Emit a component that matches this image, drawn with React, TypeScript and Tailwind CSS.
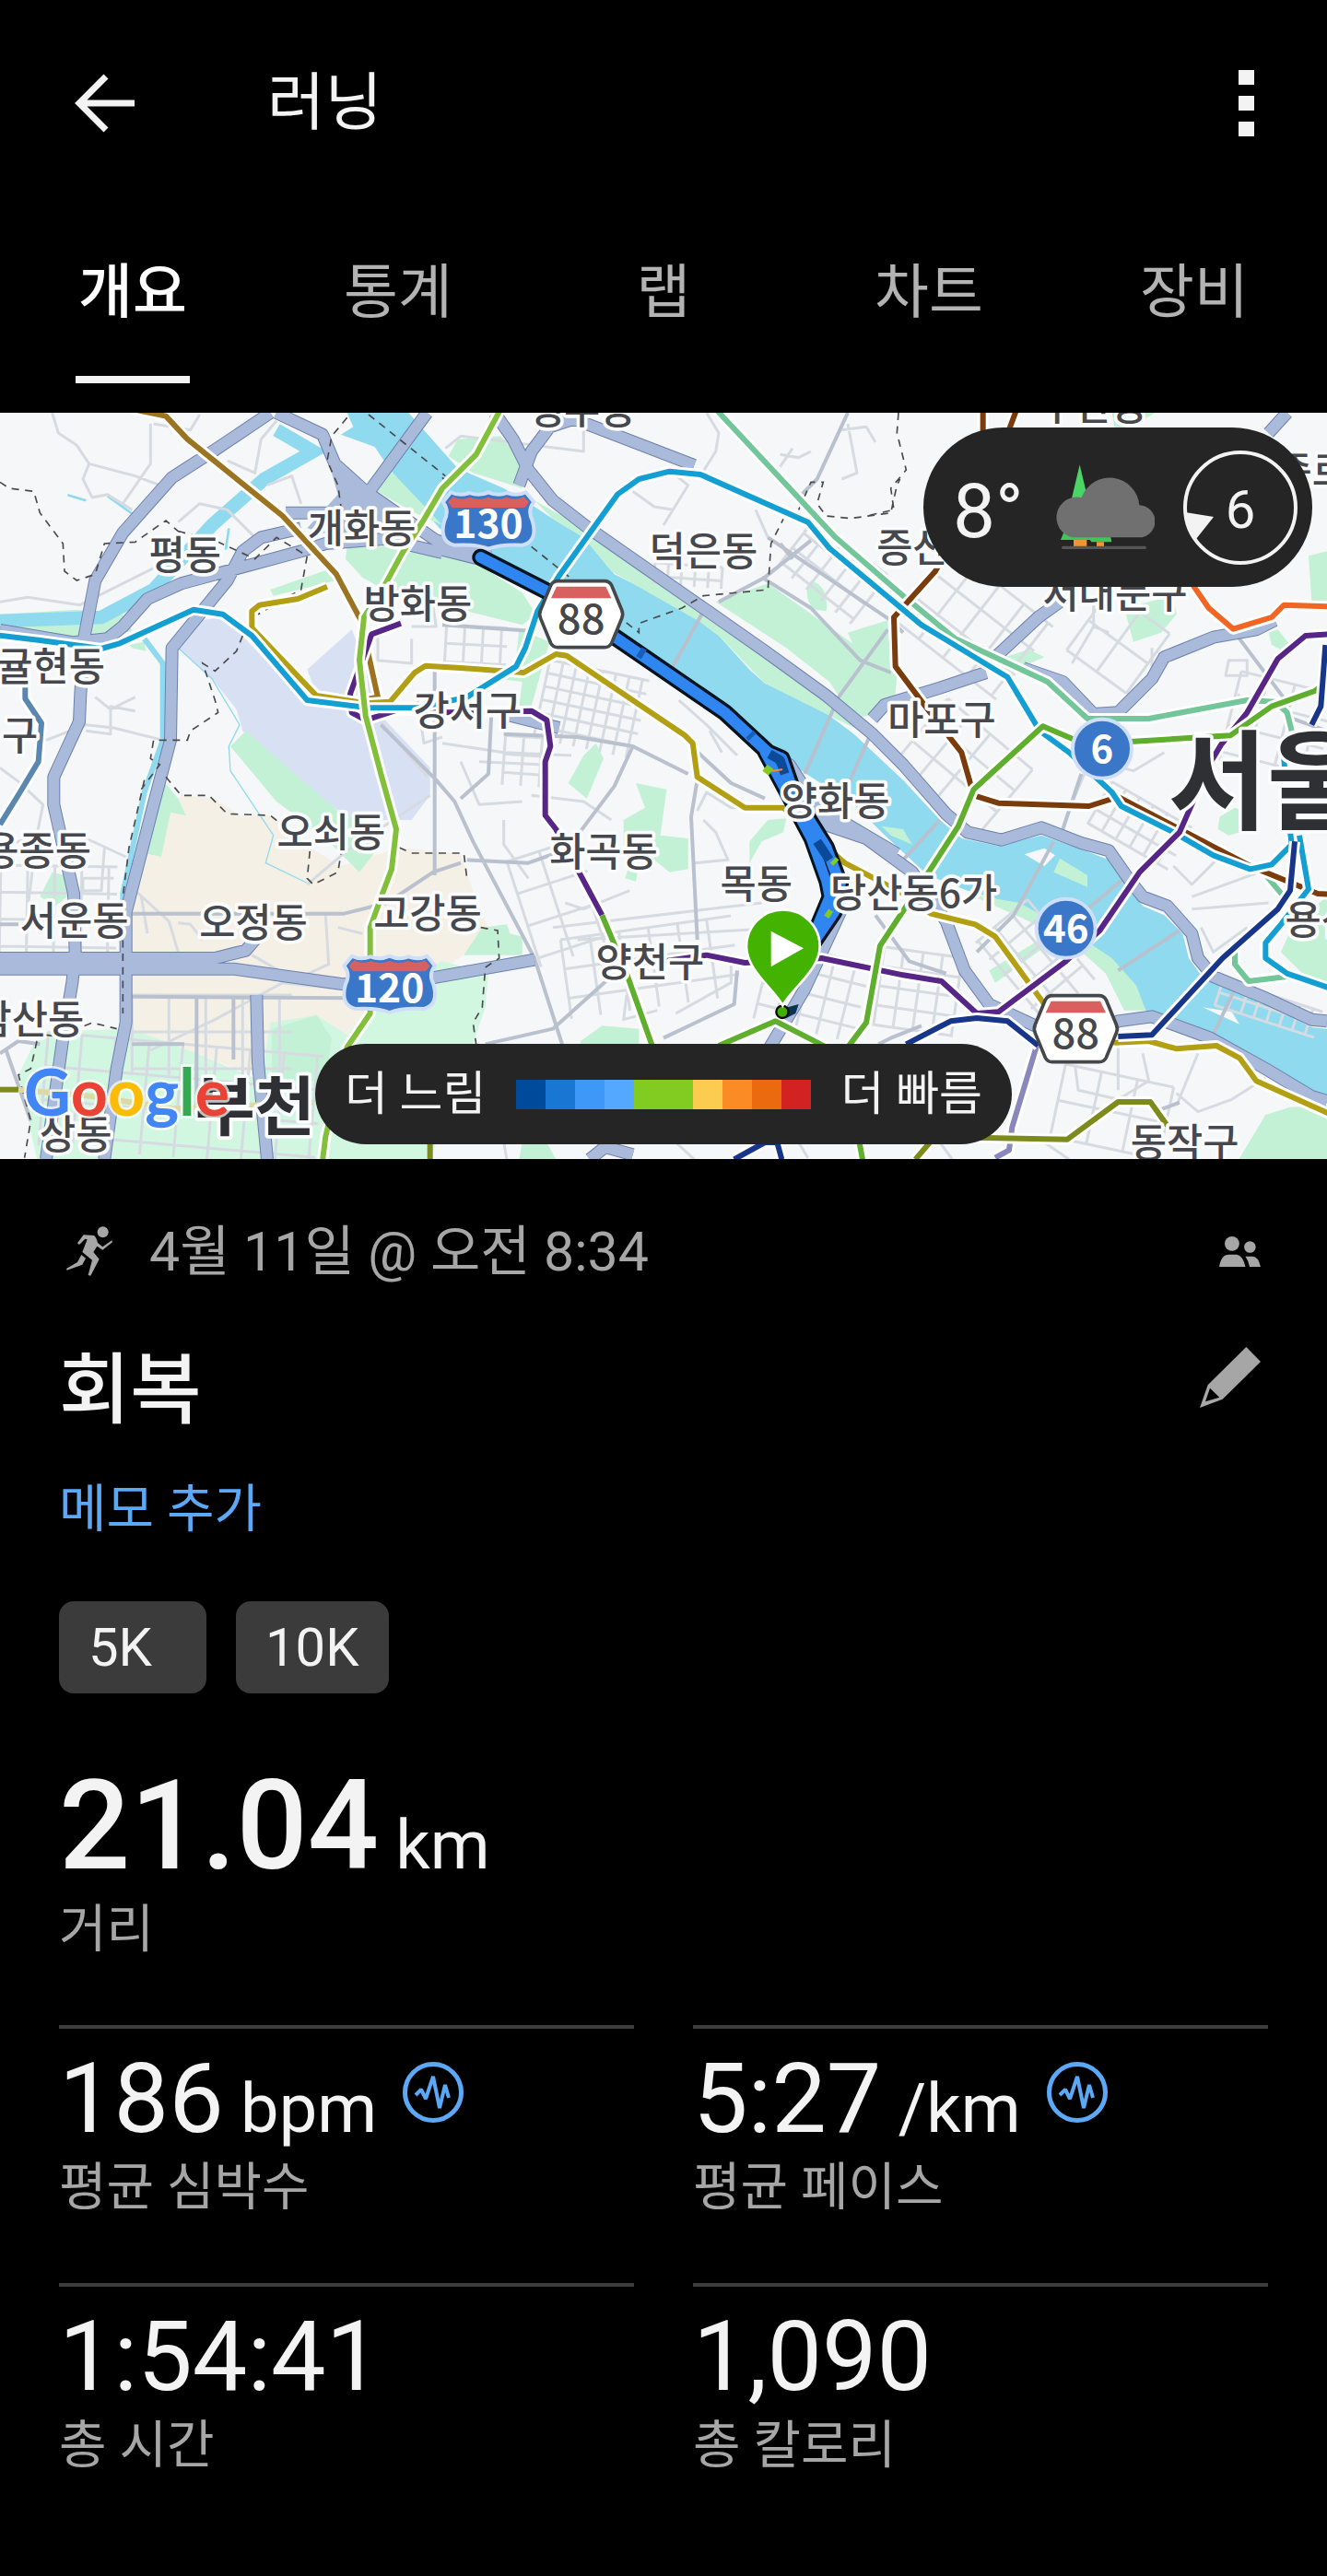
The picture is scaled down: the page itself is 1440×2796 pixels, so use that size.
import { useState } from "react";
import type { ReactNode } from "react";
import clsx from "clsx";

const tabs = ["개요", "통계", "랩", "차트", "장비"];

const paceColors = [
  "bg-[#004a9b]",
  "bg-[#1976d2]",
  "bg-[#3d98f7]",
  "bg-[#55a8ff]",
  "bg-[#82cb20]",
  "bg-[#82cb20]",
  "bg-[#fbcc4f]",
  "bg-[#fb8b24]",
  "bg-[#ec6a0f]",
  "bg-[#d32222]",
];

const stats = [
  { value: "186", unit: "bpm", label: "평균 심박수", hasChart: true },
  { value: "5:27", unit: "/km", label: "평균 페이스", hasChart: true },
  { value: "1:54:41", unit: "", label: "총 시간", hasChart: false },
  { value: "1,090", unit: "", label: "총 칼로리", hasChart: false },
];

/* ---------- map data, three map units per pixel ---------- */

const RIVER =
  "M1130 24L1150 70L1110 95L1220 135L1270 210L1430 400L1560 490L1780 600L2010 740L2370 980L2480 1100L2560 1160L2610 1190L2780 1300L2870 1390L3020 1530L3150 1580L3320 1630L3520 1740L3600 1800L3690 1890L3730 1970L3780 1980L3970 2070L4260 2240L4320 2245V2030L4270 2025L4120 1950L3920 1870L3870 1800L3850 1720L3790 1660L3720 1630L3670 1570L3610 1480L3520 1445L3390 1400L3250 1435L3130 1410L3060 1350L2940 1220L2780 1070L2700 1010L2620 960L2490 905L2440 860L2340 750L2220 660L2000 550L1900 430L1800 370L1740 330L1640 270L1490 205L1330 24Z";

const parks = [
  "M0 680L250 665L400 680L430 735L250 762L30 715Z",
  "M420 780L470 770L475 800L430 790Z",
  "M880 600L1080 530L1095 570L890 620Z",
  "M750 1110L800 1060L960 1200L1100 1320L1180 1360L1240 1430L1170 1520L1050 1400L900 1290Z",
  "M530 1220L580 1280L605 1335L555 1325L525 1470L480 1460Z",
  "M170 1520L210 1530L230 1590L180 1630L130 1600Z",
  "M1270 210L1440 390L1340 345L1220 275Z",
  "M1490 110L1630 100L1720 200L1700 270L1540 220L1460 165Z",
  "M1740 310L1830 360L1950 440L2230 640L2340 740L2200 660L1990 540L1900 430L1800 370Z",
  "M1130 460L1420 460L1560 520L1700 610L1745 680L1700 715L1440 650L1250 600L1180 560L1125 500Z",
  "M1690 730L1790 770L1780 800L1730 980L1690 980L1700 900L1620 890L1680 820Z",
  "M2330 640L2500 580L2740 750L2920 880L2910 990L2780 1020L2700 900L2560 790Z",
  "M2000 520L2080 530L2690 960L2800 1060L2490 905L2340 750L2220 660Z",
  "M2640 570Q2700 590 2690 670L2650 665Q2610 620 2640 570Z",
  "M2760 740L2890 700L2900 870L2810 850Z",
  "M1900 1140L1940 1100L1965 1150L1910 1280L1850 1230Z",
  "M2070 1230L2170 1250L2150 1400L2240 1410L2240 1510L2180 1520L2130 1480L2090 1440L2070 1550L2035 1540L2060 1460L2030 1430L2030 1350L2100 1310Z",
  "M2440 1420L2500 1350L2560 1345L2550 1390L2480 1420L2440 1490Z",
  "M1570 1700L1650 1690L1660 1720L1700 1730L1700 1790L1510 1790Z",
  "M1890 2070L1960 2020L2080 2030L2080 2090L1890 2090Z",
  "M3660 660L3820 620L3830 680L3780 740L3690 770Z",
  "M3270 820L3350 795L3400 820L3330 850Z",
  "M3620 24L3760 24L3700 60L3630 80Z",
  "M4130 740L4160 730L4200 780L4180 800L4140 780Z",
  "M4260 490L4320 475V660L4270 640Z",
  "M3970 1340L4020 1310L4075 1330L4070 1380L4000 1400L3965 1380Z",
  "M3150 1590L3320 1620L3530 1740L3620 1800L3700 1890L3730 1970L3660 1970L3600 1850L3500 1760L3330 1670Z",
  "M3220 1840L3400 1730L3420 1750L3240 1880Z",
  "M4210 1690L4320 1600V1890L4250 1860L4170 1780Z",
  "M4120 2310L4200 2285L4320 2280V2460H4030Z",
  "M3450 1475L3540 1530L3540 1568L3430 1520Z",
  "M2870 1370L2940 1380L2970 1430L2900 1400Z",
  "M1700 2400L1780 2400L1810 2455L1690 2455Z",
];

const lightParks = [
  "M130 2040L430 2030L640 2110L850 2200L880 2010L1030 1985L1130 2050L1250 1900L1440 1810L1590 1850L1580 1960L1540 2080L1400 2455L120 2455L60 2180Z",
];

const streams = [
  { d: "M900 80L1020 150L860 240L690 390L500 600L330 690L0 702", w: 44 },
  { d: "M470 760L530 840L530 1090L470 1260L400 1590V1830", w: 18 },
  { d: "M220 292L280 310M350 295L440 360M745 400L735 470", w: 8 },
  { d: "M580 790L690 890L780 1040L745 1110L750 1190L890 1400L865 1490L1010 1560", w: 4 },
];

const highways = [
  "M880 24L700 145L560 235L400 415L310 570L275 750L262 940L258 1030L175 1210V1300L240 1590L245 1790L235 1880L205 2060L150 2455",
  "M900 24L1050 95L1090 190L1190 280L1320 370L1420 440L1600 480",
  "M1390 24L1195 290L1080 350L930 350",
  "M0 732L240 772L350 760L400 720L480 630L590 580L980 475L1060 450L1250 435L1440 480",
  "M980 400L850 430L790 475L740 570L560 790L555 1090L500 1300L410 1650V2010L380 2160L340 2455",
  "M0 1800H700L800 1775L830 1740",
  "M0 1835H760L1120 1885L1420 1862L1740 1805",
  "M835 1920L840 2140L870 2455",
  "M1870 45L2260 195",
  "M1880 40L1790 70L1730 150L1690 260",
  "M1610 24L1670 110L1720 210L1800 310L1910 395L2060 500L2290 660L2490 800L2690 945L2840 1070L2940 1170L3080 1330L3150 1390L3260 1415L3390 1375L3520 1425L3610 1450L3680 1550L3720 1600L3800 1630L3880 1720L3900 1800L3950 1860L4120 1930L4270 2000L4320 2005",
  "M1440 470L1560 500L1780 610L2010 760L2370 1010L2500 1130L2570 1170L2700 1370L2820 1410L2970 1520L3080 1680L3140 1840L3220 1950L3370 2020L3600 2030L3640 2005L3750 1990L3940 2060L4120 2160L4270 2250L4320 2265",
  "M2700 1330L2920 1460",
  "M2700 1560L2740 1640L2620 1900L2500 2100",
  "M4190 24L4130 90",
  "M3450 640L3380 690L3240 820",
  "M3210 870L3060 920L2880 975L2840 1020",
  "M3330 855L3460 900L3560 1005L3640 1000L3750 890L3790 820L3950 755L4090 730L4150 700",
  "M1920 2455L1970 2415L2060 2440",
  "M1640 1005L1820 1050",
];

const streetBlocks = [
  { x: 1760, y: 860, w: 330, h: 260, step: 44, angle: 12 },
  { x: 2130, y: 520, w: 220, h: 70, step: 44, angle: 4 },
  { x: 2560, y: 440, w: 300, h: 200, step: 60, angle: 38 },
  { x: 1450, y: 720, w: 200, h: 140, step: 60, angle: 3 },
  { x: 1640, y: 1080, w: 150, h: 160, step: 60, angle: 4 },
  { x: 2960, y: 560, w: 420, h: 300, step: 100, angle: 38 },
  { x: 2960, y: 1040, w: 360, h: 260, step: 90, angle: 40 },
  { x: 3560, y: 1290, w: 300, h: 160, step: 52, angle: 30 },
  { x: 2860, y: 1780, w: 260, h: 260, step: 64, angle: 8 },
  { x: 3200, y: 1700, w: 340, h: 220, step: 70, angle: 50 },
  { x: 2480, y: 1780, w: 330, h: 260, step: 70, angle: 14 },
  { x: 1840, y: 1700, w: 560, h: 260, step: 96, angle: -8 },
  { x: 1700, y: 1440, w: 240, h: 360, step: 110, angle: -18 },
  { x: 430, y: 1920, w: 520, h: 260, step: 120, angle: 0 },
  { x: 140, y: 2080, w: 900, h: 370, step: 110, angle: 5 },
  { x: 0, y: 1500, w: 380, h: 300, step: 88, angle: 1 },
  { x: 3440, y: 2180, w: 360, h: 240, step: 120, angle: 12 },
  { x: 3960, y: 1920, w: 340, h: 90, step: 44, angle: 18 },
  { x: 4000, y: 900, w: 320, h: 300, step: 90, angle: 14 },
  { x: 3520, y: 650, w: 240, h: 240, step: 120, angle: 36 },
];

const streets = [
  "M170 24L190 90L250 130L290 190L440 230L520 260M290 190L270 240L300 300L350 290L430 340M490 60L490 190L400 320M500 60L620 80L650 30",
  "M0 640L90 625L260 650L440 560L560 500M580 380L650 320L740 340L830 430M740 180L830 220L850 110L900 50M870 260L950 230L980 320",
  "M0 1180L60 1225L140 1300L120 1400L0 1440M150 1090L280 1040L370 1050L530 1090M310 950L360 990L440 950M280 1060L360 1070V980L440 995",
  "M280 1410L410 1470M340 1440L330 1580H270V1540H370M110 1480L90 1640M440 1580L550 1680L580 1780M460 1600L480 1720",
  "M580 1685L620 1690L660 1740M1060 1660L1070 1820L960 1870L820 1790M1100 1700L1180 1720M490 2100L700 2000L920 1880L1100 1900",
  "M1000 1560L1130 1450L1400 1270M1230 1020L1390 1210M1230 740V830L1340 840V760M1400 600L1420 720H1340M1360 960L1380 1100L1440 1080",
  "M1450 140L1500 100L1900 150V60M2060 280L2130 330L2190 340M2160 390L2240 260L2190 220M2300 24L2340 90L2330 150L2280 230",
  "M2540 160L2600 170L2640 150M2580 140L2540 200M2740 80L2820 70L2850 120M2760 60L2790 220L2740 240M2460 340L2500 430",
  "M1440 1100L1640 1130L1860 1140M1500 1160L1560 1300L1700 1290M1560 1160L1770 1170M1730 1270L1900 1290L1990 1350M1640 1350L1640 1430L1720 1540",
  "M2210 960L2300 1040L2400 1140M2310 1060L2350 1130M2270 1320L2300 1260L2380 1310L2410 1310M2290 1350L2330 1390L2370 1480L2260 1490",
  "M1840 1620L1900 1640L2050 1580M1800 1700L2480 1620M1880 1740L2560 1700M2040 1920L2030 2000L2140 1970M2200 1980L2380 1880V1820",
  "M3490 840L3560 720L3610 740M3560 720V640M3750 790V860M4030 940L4080 1010M4000 830H4060V880H3990ZM3580 1160L3690 1190L3790 1130",
  "M3500 2150L3510 2230L3640 2260L3740 2200L3720 2110M3640 2080V2230M3900 2110L3830 2280M3830 2240L3900 2300L4010 2260L4120 2190",
  "M3880 1600L4100 1520M3880 1640L4130 1620M3910 1700L3950 1780L4060 1700M3820 1500L3880 1560L3990 1450M3480 1320L3530 1200",
  "M1640 2400L1650 2455M2200 2400L2260 2455M3060 2400L3100 2455M3400 2400L3480 2455M2600 2400L2630 2450",
];

const mainStreets = [
  "M0 1690H60M430 1655H1120L1260 1620L1410 1520L1500 1490M1415 840V1530M1240 1040L1420 1220L1480 1290L1540 1420L1740 1800L1830 2080",
  "M600 2080H430M640 1930V2300M760 1930V2130M430 1925L1120 1930M0 2110L60 2070L130 2080M20 2100L100 2330",
  "M1440 715L1740 735M1600 1000L1590 1200L1500 1280M1640 1070L1880 1080L2060 1110L2240 1200M2060 1110L2000 1240L1880 1400",
  "M1520 1480L1720 1490L1860 1440M2270 1220L2250 1340L2270 1740M1580 2080L1800 2030L2000 1850M2400 1840L2390 1950L2160 2060",
  "M2760 24L2660 240L2610 290M2340 640L2490 560L2640 440M2500 430L2900 700L2940 740M2480 560L2640 660L2800 830L2900 870",
  "M2890 730L2730 950M2730 950L2620 1200M2830 1080L2750 1260M2290 670L2180 870M2540 450L2580 500M2240 1100L2380 1230L2490 1280",
  "M3060 1350L2940 1480M3430 1420L3300 1660L3180 1780M3460 1380L3520 1200M3660 1540L3540 1640M3840 1710L3640 1840M4020 1900L3940 2070",
  "M4020 740L4200 980M4320 1060L4180 1010M2850 1660L2960 1810L3080 1850M2860 2080L2900 2060L3000 2020M3840 2270L3760 2300",
];

const borders = [
  "M0 250L30 270L110 280L130 350L205 450L210 540L250 570L310 550L340 450L440 445L540 375L580 410",
  "M580 410L700 440L830 500L900 430L1000 490L980 600L910 640L840 680",
  "M1130 40L1080 100L1065 180L1100 260L1110 330M1200 30L1450 230M1440 235L1460 260",
  "M790 750L770 800L700 865L660 840L700 960L710 1000L620 1060L610 1090L500 1090L490 1150L520 1170L460 1250",
  "M470 1220L420 1440L400 1600L400 1980M540 1210L590 1270L680 1270L740 1330L880 1335L1010 1440L1000 1540L1020 1560L1100 1520L1110 1460",
  "M1300 1440L1340 1458H1510L1520 1540M1565 1700L1620 1710L1625 1800L1580 1830L1570 1960L1540 2010L1550 2080",
  "M150 2050L190 2055L300 2010L380 2030M120 2070L100 2160L60 2180L100 2330L80 2450",
  "M1730 460L2080 740V710L2220 660L2290 620L2500 600L2510 450L2550 370M2600 340L2640 250H2680L2660 320L2690 360L2770 368L2900 350L2920 260L2930 240",
  "M2925 24L2920 90L2950 210L2900 270L2910 340L2820 360",
];

const subways = [
  { color: "#5a87b0", d: "M82 860V955L135 1035L125 1160L65 1260L0 1365" },
  { color: "#9c7320", d: "M430 12L540 35L610 110L920 360L1095 550L1175 700L1230 950L1150 965" },
  { color: "#562586", d: "M1305 710L1210 745L1140 940L1145 1000L1190 1025L1300 990L1460 1000L1730 995L1780 1025L1792 1110L1775 1160V1335L1810 1380L1960 1660" },
  { color: "#5fae2e", d: "M1960 1660L2040 1850L2125 2090V2200" },
  { color: "#b39f14", d: "M1065 590L970 630L845 650L820 670V725L1030 945L1190 970L1270 965L1350 870L1385 848L1500 855L1705 870L1810 810L1845 815L2230 1075L2255 1100L2270 1210L2425 1310H2550L2750 1490L2940 1590L3030 1655L3175 1690L3240 1730L3400 1950L3500 2050L3630 2075L3740 2070L3830 2095L3960 2085L4035 2125L4090 2200L4330 2308" },
  { color: "#8a87bd", d: "M3375 2085L3295 2350L3285 2425L3240 2450" },
  { color: "#7d8a1c", d: "M2980 2455L3040 2385H3210L3475 2390L3640 2268H3745L3800 2345" },
  { color: "#73c69a", d: "M2330 12L2720 430L2940 620L3110 760L3410 900L3540 1020H3740L4060 960L4150 965L4190 1000L4205 1060" },
  { color: "#73c69a", d: "M4125 1535L4180 1600L4160 1650L4020 1760V1820L4065 1875L4190 1860" },
  { color: "#7a3c0c", d: "M3200 12V200M3310 12L3240 200L3045 540L2910 690L2915 850L3020 990L3130 1130L3170 1270L3250 1295L3545 1305L3640 1275L4070 1500L4290 1590L4330 1592" },
  { color: "#149fd3", d: "M-10 748L130 765L330 792L390 775L630 665L725 680L820 750L1000 960L1200 985H1360L1520 950L1680 850L1710 790L1750 670L1820 555L2010 290L2080 240L2180 215L2280 225L2630 380L2700 465L2940 665L3000 715L3280 885L3385 1060L3480 1130L3620 1260L3650 1305L3820 1390L3950 1465L4070 1510L4140 1495L4205 1430L4190 1300L4180 1150" },
  { color: "#149fd3", d: "M4230 1400L4260 1575L4170 1690L4120 1750V1800L4190 1850L4330 1898" },
  { color: "#562586", d: "M2060 1825L2300 1790L2425 1815L2675 1800L2940 1855L3065 1875L3180 1980L3250 1975L3470 1810L3580 1710L3710 1520L3840 1390L3895 1265L3930 1180L3975 1105L4060 1000L4160 825L4250 750L4330 745" },
  { color: "#5fae2e", d: "M2340 2085L2525 2005L2690 2090M4330 895L4280 930L4140 980L4005 1075L3680 1095L3490 1085L3395 1045L3170 1250L3120 1370L3010 1540L2865 1760L2820 2010L2760 2090V2200L2808 2455" },
  { color: "#17368a", d: "M2950 2080L3095 2005L3180 1995L3280 2005L3380 2085M3640 2055L3750 2050L3980 1800L4160 1640L4200 1580L4215 1420M4315 780L4300 980L4270 1040M2390 2455L2490 2400H2530L2545 2455" },
  { color: "#f26522", d: "M3880 580L3935 660L4015 728L4140 690L4180 650L4330 655" },
  { color: "#82c03c", d: "M1630 12L1550 160L1440 270L1375 380L1310 480L1250 590L1185 690L1170 830L1190 1010L1240 1200L1290 1380L1275 1510L1245 1590L1205 1700V1980L1130 2090L1060 2380L1050 2460" },
];

const ROUTE = "M1565 495L1790 610L2010 760L2360 1000L2500 1130L2545 1150L2590 1280L2690 1440L2735 1560L2715 1650L2640 1760";
const ROUTE_BACK = "M2490 1130L2560 1260L2640 1410L2690 1550L2700 1600L2650 1720";

const placeLabels = [
  { text: "평동", x: 602, y: 478 },
  { text: "개화동", x: 1178, y: 392 },
  { text: "방화동", x: 1360, y: 636 },
  { text: "귤현동", x: 165, y: 840 },
  { text: "구", x: 65, y: 1066 },
  { text: "강서구", x: 1522, y: 985 },
  { text: "덕은동", x: 2290, y: 465 },
  { text: "증산동", x: 3030, y: 455 },
  { text: "서대문구", x: 3630, y: 605 },
  { text: "마포구", x: 3066, y: 1015 },
  { text: "양화동", x: 2720, y: 1280 },
  { text: "화곡동", x: 1965, y: 1445 },
  { text: "목동", x: 2462, y: 1550 },
  { text: "당산동6가", x: 2975, y: 1580 },
  { text: "양천구", x: 2116, y: 1805 },
  { text: "오쇠동", x: 1078, y: 1380 },
  { text: "고강동", x: 1392, y: 1645 },
  { text: "오정동", x: 825, y: 1675 },
  { text: "서운동", x: 242, y: 1668 },
  { text: "용종동", x: 120, y: 1442 },
  { text: "삼산동", x: 97, y: 1990 },
  { text: "상동", x: 247, y: 2365 },
  { text: "동작구", x: 3857, y: 2392 },
  { text: "용산구", x: 4360, y: 1665 },
  { text: "종로구", x: 4330, y: 205 },
  { text: "행주동", x: 1895, y: 4 },
  { text: "구산동", x: 3560, y: -8 },
];

function InterstateShield({ x, y, children }: { x: number; y: number; children: ReactNode }) {
  return (
    <g transform={`translate(${x} ${y})`}>
      <path
        d="M-122 -92Q-95 -78 -62 -90Q-30 -78 0 -92Q30 -78 62 -90Q95 -78 122 -92L148 -60Q126 -34 143 0Q162 66 112 80Q40 76 0 92Q-40 76 -112 80Q-162 66 -143 0Q-126 -34 -148 -60Z"
        fill="#3a77c9"
        stroke="#cfdffb"
        strokeWidth="12"
        strokeLinejoin="round"
      />
      <path d="M-115 -78Q-90 -64 -60 -76Q-30 -64 0 -76Q30 -64 60 -76Q90 -64 115 -78L132 -60L118 -42H-118L-132 -60Z" fill="#d9605f" />
      <text y="58" textAnchor="middle" fill="#fff" fontSize="128" fontWeight="700">
        {children}
      </text>
    </g>
  );
}

function ExpresswayShield({ x, y }: { x: number; y: number }) {
  return (
    <g transform={`translate(${x} ${y})`}>
      <path
        d="M-76 -108H76Q92 -108 99 -94L132 -14Q138 0 132 14L99 94Q92 108 76 108H-76Q-92 108 -99 94L-132 14Q-138 0 -132 -14L-99 -94Q-92 -108 -76 -108Z"
        fill="#fff"
        stroke="#45474a"
        strokeWidth="11"
      />
      <path d="M-80 -90H80L98 -52H-98Z" fill="#d9605f" />
      <text y="64" textAnchor="middle" fill="#45474a" fontSize="136" fontWeight="500">
        88
      </text>
    </g>
  );
}

function RouteCircle({ x, y, children }: { x: number; y: number; children: ReactNode }) {
  return (
    <g transform={`translate(${x} ${y})`}>
      <circle r="96" fill="#3a77c9" stroke="#cfdffb" strokeWidth="12" />
      <text y="46" textAnchor="middle" fill="#fff" fontSize="126" fontWeight="700">
        {children}
      </text>
    </g>
  );
}

function StreetBlock({ x, y, w, h, step, angle }: (typeof streetBlocks)[number]) {
  let d = "";
  for (let i = 0; i <= w; i += step) d += `M${x + i} ${y}v${h}`;
  for (let j = 0; j <= h; j += step) d += `M${x} ${y + j}h${w}`;
  return <path d={d} transform={`rotate(${angle} ${x + w / 2} ${y + h / 2})`} />;
}

function RouteMap() {
  return (
    <svg
      viewBox="0 24 4320 2430"
      preserveAspectRatio="xMidYMid slice"
      className="block h-full w-full font-['Noto_Sans_CJK_KR',sans-serif]"
      role="img"
      aria-label="러닝 경로 지도"
    >
      <rect y="24" width="4320" height="2430" fill="#f6f7f8" />

      {/* Land use */}
      <path d="M580 790L650 700L730 690L1000 970L1150 980L1240 1010L1400 1180L1400 1270L1340 1350L1150 1350L930 1210L790 1060L770 990L690 890Z" fill="#d8e1f4" />
      <path d="M1000 860L1145 730L1230 950L1030 940Z" fill="#d8e1f4" />
      <path d="M590 1270L700 1280L780 1335L880 1335L1010 1440L1110 1500L1300 1440L1500 1460L1560 1640L1600 1720L1440 1840L1250 1900L1130 2050L870 2200L640 2110L430 2030V1650L480 1400Z" fill="#f5f0e5" />
      <path d={lightParks.join("")} fill="#d2f7e1" />
      <path d="M885 2030L1030 1985L1080 2060L1060 2200L885 2200Z" fill="#c3f1d5" />
      <path d={RIVER} fill="#8fdaee" />
      <path d={parks.join("")} fill="#c3f1d5" />
      <path d="M3335 1462L3400 1442L3435 1465L3400 1500ZM3915 1960L4010 1975L4035 2015Z" fill="#f6f7f8" />
      {streams.map((stream) => (
        <path key={stream.d} d={stream.d} fill="none" stroke="#8fdaee" strokeWidth={stream.w} />
      ))}

      {/* Roads */}
      <g fill="none" stroke="#d6dbe2" strokeWidth="9" strokeLinejoin="round">
        {streetBlocks.map((block) => (
          <StreetBlock key={`${block.x}-${block.y}`} {...block} />
        ))}
        <path d={streets.join("")} />
      </g>
      <path d={mainStreets.join("")} fill="none" stroke="#b9c0ce" strokeWidth="12" strokeLinejoin="round" />
      <path d={highways.join("")} fill="none" stroke="#6d80ad" strokeWidth="42" strokeLinejoin="round" />
      <path d={highways.join("")} fill="none" stroke="#a9badb" strokeWidth="36" strokeLinejoin="round" />
      <path d="M1060 150L1120 230L1200 280L1300 370L1100 430L1000 400L1100 290Z" fill="#a9badb" />
      <path d={borders.join("")} fill="none" stroke="#4a4b4e" strokeWidth="5" strokeDasharray="24 20" />

      {/* Subway lines */}
      <path d="M0 2228H60" stroke="#7d8a1c" strokeWidth="18" />
      <path d="M60 2228L300 2250L560 2290L1020 2270" fill="none" stroke="#dcd9a5" strokeWidth="18" />
      <path d="M1400 2390V2455" stroke="#7d8a1c" strokeWidth="18" />
      {subways.map((line) => (
        <g key={line.d} fill="none" strokeLinejoin="round">
          <path d={line.d} stroke="#fff" strokeWidth="36" />
          <path d={line.d} stroke={line.color} strokeWidth="18" />
        </g>
      ))}

      {/* Recorded track */}
      <g fill="none" strokeLinejoin="round" strokeLinecap="round">
        <path d={ROUTE} stroke="#05131f" strokeWidth="56" />
        <path d={ROUTE_BACK} stroke="#05131f" strokeWidth="50" />
        <path d={ROUTE} stroke="#2f86f0" strokeWidth="36" />
        <path d={ROUTE_BACK} stroke="#2f86f0" strokeWidth="32" />
        <path d="M2505 1135L2540 1155L2555 1200M2660 1420L2700 1480" stroke="#0a4a99" strokeWidth="30" strokeLinecap="butt" />
        <path d="M2080 802L2096 812M2440 1070L2450 1080M2600 1320L2612 1340" stroke="#175fb8" strokeWidth="34" strokeLinecap="butt" />
        <path d="M2490 1180L2510 1195M2690 1650L2705 1660M2712 1480L2722 1490" stroke="#82cb20" strokeWidth="26" strokeLinecap="butt" />
        <path d="M2515 1190L2545 1186" stroke="#fb8b24" strokeWidth="6" />
      </g>

      {/* Place names */}
      <g
        fill="#46484d"
        stroke="#fbfcfd"
        strokeWidth="22"
        strokeLinejoin="round"
        paintOrder="stroke"
        textAnchor="middle"
        dominantBaseline="central"
        fontWeight="500"
      >
        {placeLabels.map((label) => (
          <text key={label.text + label.x} x={label.x} y={label.y} fontSize="128">
            {label.text}
          </text>
        ))}
        <text x="830" y="2268" fontSize="212" fontWeight="700" fill="#2f3033">
          부천
        </text>
        <text x="4125" y="1200" fontSize="350" fontWeight="700" fill="#2f3033">
          서울
        </text>
      </g>

      <InterstateShield x={1590} y={375}>130</InterstateShield>
      <InterstateShield x={1268} y={1885}>120</InterstateShield>
      <ExpresswayShield x={1892} y={680} />
      <ExpresswayShield x={3502} y={2030} />
      <RouteCircle x={3588} y={1118}>6</RouteCircle>
      <RouteCircle x={3470} y={1703}>46</RouteCircle>

      {/* Start pin */}
      <path d="M2525 1970L2600 1950L2590 1980L2560 1995Z" fill="#0a3350" />
      <circle cx="2547" cy="1975" r="20" fill="#3fb000" stroke="#0b0b0b" strokeWidth="7" />
      <path
        d="M2548 1954C2520 1900 2430 1840 2430 1762A119 119 0 0 1 2669 1762C2669 1840 2576 1900 2548 1954Z"
        fill="#44b200"
        stroke="#fff"
        strokeWidth="8"
      />
      <path d="M2510 1712V1828L2616 1768Z" fill="#fff" />

      <text
        x="78"
        y="2312"
        fontSize="210"
        fontWeight="700"
        stroke="#ffffff"
        strokeOpacity="0.7"
        strokeWidth="16"
        paintOrder="stroke"
        className="font-['Lato',sans-serif]"
      >
        <tspan fill="#4285f4">G</tspan>
        <tspan fill="#ea4335">o</tspan>
        <tspan fill="#fbbc05">o</tspan>
        <tspan fill="#4285f4">g</tspan>
        <tspan fill="#34a853">l</tspan>
        <tspan fill="#ea4335">e</tspan>
      </text>
    </svg>
  );
}

function WeatherPill() {
  return (
    <div className="absolute right-4 top-4 flex h-[173px] w-[422px] items-center justify-between rounded-full bg-[#252525] pl-8 pr-4 text-[#f3f3f3]">
      <span className="pt-2 text-[82px] leading-none">8°</span>
      <svg viewBox="0 0 336 280" className="h-[94px] w-[112px]" aria-label="흐림">
        <path d="M92 0L118 110H66Z" fill="#4bd564" />
        <path d="M30 245L40 220H190L196 252L130 252L125 245Z" fill="#3fc558" />
        <path d="M72 245H115V266H72ZM147 252H171V266H147Z" fill="#f59332" />
        <path d="M38 270H304" stroke="#565656" strokeWidth="10" strokeLinecap="round" />
        <path d="M68 237A66 66 0 1 1 98 107A97 97 0 0 1 286 132A52 52 0 0 1 284 237Z" fill="#707070" />
      </svg>
      <div className="relative flex size-[124px] items-center justify-center">
        <svg viewBox="0 0 124 124" className="absolute inset-0" aria-hidden="true">
          <circle cx="62" cy="62" r="60" fill="none" stroke="#f3f3f3" strokeWidth="4" />
          <path d="M2 67L33 72L14 96Q4 82 2 67Z" fill="#f3f3f3" />
        </svg>
        <span className="pt-1 text-[58px] leading-none">6</span>
      </div>
    </div>
  );
}

function PaceLegend() {
  return (
    <div className="absolute bottom-4 left-1/2 flex h-[109px] w-[756px] -translate-x-1/2 items-center justify-between whitespace-nowrap rounded-full bg-[#252525] px-8 text-[51px] leading-none text-[#f3f3f3]">
      <span>더 느림</span>
      <div className="flex h-8 w-80">
        {paceColors.map((color, i) => (
          <div key={i} className={clsx("flex-1", color)} />
        ))}
      </div>
      <span>더 빠름</span>
    </div>
  );
}

function PulseIcon() {
  return (
    <svg viewBox="0 0 66 66" className="size-[66px]" fill="none" stroke="#5ba8f7" aria-hidden="true">
      <circle cx="33" cy="33" r="30.5" strokeWidth="5" />
      <path d="M14 36L20 30L25 40L33 16L40 50L46 25L50 39" strokeWidth="4" strokeLinejoin="bevel" />
    </svg>
  );
}

export default function App() {
  const [activeTab, setActiveTab] = useState("개요");

  return (
    <main className="min-h-screen bg-black font-['Roboto','Noto_Sans_CJK_KR',sans-serif] text-[#f3f3f3]">
      <header className="flex h-56 items-center pl-20 pr-[78px]">
        <button type="button" aria-label="뒤로">
          <svg viewBox="0 0 66 64" className="h-16 w-[66px]" fill="none" stroke="currentColor" strokeWidth="7">
            <path d="M66 32H6M35 3L6 32L35 61" />
          </svg>
        </button>
        <h1 className="ml-36 text-[68px] leading-none">러닝</h1>
        <button type="button" aria-label="더보기" className="ml-auto">
          <svg viewBox="0 0 18 72" className="h-[72px] w-[18px]" fill="currentColor">
            <path d="M0 0H17V16H0ZM0 28H17V44H0ZM0 56H17V72H0Z" />
          </svg>
        </button>
      </header>

      <nav role="tablist" className="grid grid-cols-5 pb-8">
        {tabs.map((tab) => (
          <button
            key={tab}
            type="button"
            role="tab"
            aria-selected={tab === activeTab}
            onClick={() => setActiveTab(tab)}
            className={clsx(
              "h-48 w-[124px] justify-self-center border-b-8 pt-1 text-[64px] leading-none",
              tab === activeTab ? "border-[#f3f3f3] font-medium text-white" : "border-transparent text-[#b3b3b3]"
            )}
          >
            {tab}
          </button>
        ))}
      </nav>

      <section className="relative aspect-video overflow-hidden">
        <RouteMap />
        <WeatherPill />
        <PaceLegend />
      </section>

      <section className="px-16 pb-16 pt-[60px]">
        <div className="flex h-20 items-center text-[#a6a6a6]">
          <svg viewBox="0 0 150 162" className="ml-2 h-[54px] w-[50px]" fill="currentColor" aria-label="러닝">
            <circle cx="119" cy="19" r="18" />
            <path d="M36 55L56 28L90 30Q98 36 102 54L118 67L148 46L150 52L118 77L100 65L88 84L107 107L79 161L71 159L84 110L52 84L68 43L61 41L42 60Z" />
            <path d="M49 93L63 104L52 125L2 143L0 138L36 117Z" />
          </svg>
          <p className="ml-10 text-[59px] leading-none">4월 11일 @ 오전 8:34</p>
          <svg viewBox="0 0 136 100" className="ml-auto mr-2 h-[33px] w-[45px]" fill="currentColor" aria-label="공개 범위">
            <circle cx="42" cy="24" r="24" />
            <circle cx="101" cy="35" r="19" />
            <path d="M0 100Q6 60 32 60H58Q78 64 86 100ZM86 66H110Q128 66 136 100H100Q96 80 86 66Z" />
          </svg>
        </div>

        <div className="mt-16 flex h-24 items-center justify-between">
          <h2 className="text-[84px] font-medium leading-none">회복</h2>
          <button type="button" aria-label="이름 수정" className="mr-2 self-start text-[#a6a6a6]">
            <svg viewBox="0 0 198 198" className="size-[66px]" fill="currentColor" fillRule="evenodd">
              <path d="M151 0L198 48L74 170L0 198L26 124ZM33 134L18 178L64 164Z" />
            </svg>
          </button>
        </div>

        <button type="button" className="mt-12 block text-[56px] leading-[64px] text-[#5ba8f7]">
          메모 추가
        </button>

        <ul className="mt-[68px] flex gap-8 text-[58px] leading-[100px]">
          <li className="min-w-40 rounded-2xl bg-[#3b3b3b] px-8">5K</li>
          <li className="min-w-40 rounded-2xl bg-[#3b3b3b] px-8">10K</li>
        </ul>

        <div className="mt-[76px]">
          <p className="text-[136px] font-medium leading-[136px]">
            21.04<span className="text-[74px] font-normal leading-none"> km</span>
          </p>
          <p className="mt-3 text-[56px] leading-[64px] text-[#a6a6a6]">거리</p>
        </div>

        <div className="mt-[72px] grid grid-cols-2 gap-x-16 gap-y-[72px]">
          {stats.map((stat) => (
            <div key={stat.label} className="border-t-4 border-[#3d3d3d] pt-5">
              <div className="flex gap-7">
                <p className="text-[106px] leading-[112px]">
                  {stat.value}
                  {stat.unit && <span className="text-[74px] leading-none"> {stat.unit}</span>}
                </p>
                {stat.hasChart && (
                  <div className="pt-4">
                    <PulseIcon />
                  </div>
                )}
              </div>
              <p className="mt-2 text-[56px] leading-[64px] text-[#a6a6a6]">{stat.label}</p>
            </div>
          ))}
        </div>
      </section>
    </main>
  );
}
